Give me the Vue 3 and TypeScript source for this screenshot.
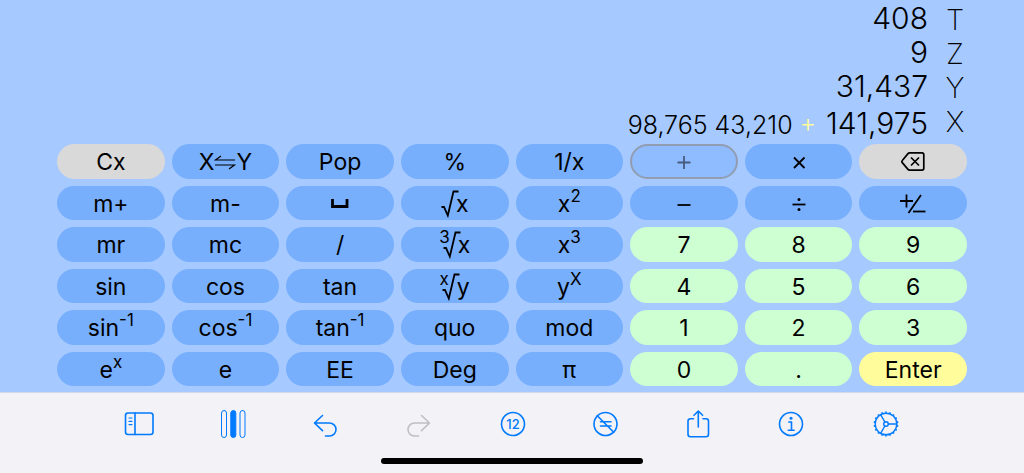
<script setup lang="ts">
interface Key {
  label: string
  sup?: string
  index?: string
  icon?: 'swap' | 'space' | 'delete' | 'sign' | 'root' | 'plus' | 'minus' | 'times' | 'divide'
  tone?: 'grey' | 'green' | 'yellow' | 'pressed'
  name?: string
}

const keys: Key[] = [
  { label: 'Cx', tone: 'grey' },
  { label: '', icon: 'swap', name: 'Swap X and Y' },
  { label: 'Pop' },
  { label: '%' },
  { label: '1/x' },
  { label: '', icon: 'plus', tone: 'pressed', name: 'Add' },
  { label: '', icon: 'times', name: 'Multiply' },
  { label: '', icon: 'delete', tone: 'grey', name: 'Delete' },

  { label: 'm+' },
  { label: 'm-' },
  { label: '', icon: 'space', name: 'Space' },
  { label: 'x', icon: 'root' },
  { label: 'x', sup: '2' },
  { label: '', icon: 'minus', name: 'Subtract' },
  { label: '', icon: 'divide', name: 'Divide' },
  { label: '', icon: 'sign', name: 'Change sign' },

  { label: 'mr' },
  { label: 'mc' },
  { label: '/' },
  { label: 'x', icon: 'root', index: '3' },
  { label: 'x', sup: '3' },
  { label: '7', tone: 'green' },
  { label: '8', tone: 'green' },
  { label: '9', tone: 'green' },

  { label: 'sin' },
  { label: 'cos' },
  { label: 'tan' },
  { label: 'y', icon: 'root', index: 'x' },
  { label: 'y', sup: 'X' },
  { label: '4', tone: 'green' },
  { label: '5', tone: 'green' },
  { label: '6', tone: 'green' },

  { label: 'sin', sup: '-1' },
  { label: 'cos', sup: '-1' },
  { label: 'tan', sup: '-1' },
  { label: 'quo' },
  { label: 'mod' },
  { label: '1', tone: 'green' },
  { label: '2', tone: 'green' },
  { label: '3', tone: 'green' },

  { label: 'e', sup: 'x' },
  { label: 'e' },
  { label: 'EE' },
  { label: 'Deg' },
  { label: 'π' },
  { label: '0', tone: 'green' },
  { label: '.', tone: 'green' },
  { label: 'Enter', tone: 'yellow' },
]

const teeth = Array.from({ length: 18 }, (_, i) => i * 20)
</script>

<template>
  <main class="calculator">
    <section class="display" aria-label="Stack">
      <div class="values">
        <output>408</output>
        <output>9</output>
        <output>31,437</output>
        <div class="entry">
          <span class="history">98,765 43,210 <span class="op">+</span></span>
          <output>141,975</output>
        </div>
      </div>
      <div class="registers">
        <span>T</span>
        <span>Z</span>
        <span>Y</span>
        <span>X</span>
      </div>
    </section>

    <section class="keypad" aria-label="Keypad">
      <button v-for="(key, i) in keys" :key="i" type="button" class="key" :class="key.tone" :aria-label="key.name">
        <template v-if="key.icon === 'swap'">
          <span>X</span>
          <svg width="22" height="18" viewBox="0 0 22 18" class="line thin">
            <path d="M21 7H1.500L7 3M1 12h19.500L15 16" />
          </svg>
          <span>Y</span>
        </template>
        <svg v-else-if="key.icon === 'plus'" width="14" height="20" viewBox="0 0 14 20" class="line">
          <path d="M.5 10.500h13M7 4v13" />
        </svg>
        <svg v-else-if="key.icon === 'minus'" width="14" height="20" viewBox="0 0 14 20" class="line">
          <path d="M.5 11h13" />
        </svg>
        <svg v-else-if="key.icon === 'times'" width="14" height="20" viewBox="0 0 14 20" class="line">
          <path d="M2 5.500l10.500 10.500M12.500 5.500L2 16" />
        </svg>
        <svg v-else-if="key.icon === 'divide'" width="14" height="20" viewBox="0 0 14 20" class="line">
          <path d="M.5 10.500h13" />
          <circle cx="7" cy="5.500" r="1.500" class="dot" />
          <circle cx="7" cy="15.500" r="1.500" class="dot" />
        </svg>
        <svg v-else-if="key.icon === 'space'" width="18" height="12" viewBox="0 0 18 12" class="line heavy">
          <path d="M1.500 1v7.500h14.500V1" />
        </svg>
        <svg v-else-if="key.icon === 'delete'" width="24" height="20" viewBox="0 0 24 20" class="line delete">
          <path d="M8.500 .9h12.500a1.800 1.800 0 0 1 1.800 1.800v13.600a1.800 1.800 0 0 1-1.800 1.800H8.500a2 2 0 0 1-1.500-.7L1.500 10.900a2 2 0 0 1 0-2.700L7 1.600A2 2 0 0 1 8.500 .9zM10 5.500l8 8M18 5.500l-8 8" />
        </svg>
        <svg v-else-if="key.icon === 'sign'" width="26" height="20" viewBox="0 0 26 20" class="line">
          <path d="M0 7h13M6.500 .5v13M21 1L8.500 19" />
          <path d="M13 17.500h12.500" />
        </svg>
        <template v-else-if="key.icon === 'root'">
          <span v-if="key.index" class="index">{{ key.index }}</span>
          <svg width="18" height="28" viewBox="0 0 18 28" class="line root">
            <path d="M.5 17H3L6.800 25.500 12.500 1.500H17.500" />
          </svg>
          <span>{{ key.label }}</span>
        </template>
        <template v-else>
          <span>{{ key.label }}</span><span v-if="key.sup" class="sup">{{ key.sup }}</span>
        </template>
      </button>
    </section>

    <footer class="dock">
      <nav class="toolbar" aria-label="Tools">
        <button type="button" aria-label="Sidebar">
          <svg width="30" height="30" viewBox="0 0 30 30">
            <rect x="1.500" y="4" width="27.500" height="21.500" rx="2.500" />
            <path d="M11 4v21.500" />
            <path d="M5 9h3M5 12.300h3M5 15.600h3" class="rows" />
          </svg>
        </button>
        <button type="button" aria-label="Columns">
          <svg width="30" height="30" viewBox="0 0 30 30">
            <rect x="4.500" y="1.500" width="5" height="27" rx="2.500" class="fine" />
            <rect x="13.800" y="1.500" width="5" height="27" rx="2.500" class="solid" />
            <rect x="23" y="1.500" width="5" height="27" rx="2.500" class="fine" />
          </svg>
        </button>
        <button type="button" aria-label="Undo">
          <svg width="30" height="30" viewBox="0 0 30 30">
            <path d="M11.500 6.500L3.500 14l8 7.700M3.500 14h15a6.500 6.500 0 0 1 0 13h-4" />
          </svg>
        </button>
        <button type="button" aria-label="Redo" disabled>
          <svg width="30" height="30" viewBox="0 0 30 30">
            <path d="M17.500 6.500l8 7.500-8 7.700M25.500 14h-15a6.500 6.500 0 0 0 0 13h4" />
          </svg>
        </button>
        <button type="button" aria-label="12 digits">
          <svg width="30" height="30" viewBox="0 0 30 30">
            <circle cx="15" cy="15" r="11.500" />
            <text x="15" y="20" text-anchor="middle" class="digits">12</text>
          </svg>
        </button>
        <button type="button" aria-label="Not equal">
          <svg width="30" height="30" viewBox="0 0 30 30">
            <circle cx="14.500" cy="15" r="11.500" />
            <path d="M9.500 12.700h10.500M9.500 17h10.500M6.300 6.800l16.400 16.400" />
          </svg>
        </button>
        <button type="button" aria-label="Share">
          <svg width="30" height="30" viewBox="0 0 30 30">
            <path d="M9.500 9.800H6.500A2.500 2.500 0 0 0 4 12.300v13A2.500 2.500 0 0 0 6.500 27.800h15.500a2.500 2.500 0 0 0 2.500-2.500V12.300A2.500 2.500 0 0 0 22 9.800h-3M14.300 18V2M10 6.300L14.300 2 18.600 6.300" />
          </svg>
        </button>
        <button type="button" aria-label="Information">
          <svg width="30" height="30" viewBox="0 0 30 30">
            <circle cx="13" cy="15" r="11.500" />
            <path d="M10.800 13H13.500v8M10.300 21.200h5.800" />
            <circle cx="13" cy="9.300" r="1.500" class="dot" />
          </svg>
        </button>
        <button type="button" aria-label="Settings">
          <svg width="30" height="30" viewBox="0 0 30 30" class="gear">
            <circle cx="15" cy="15" r="10.800" />
            <circle cx="15" cy="15" r="2.300" />
            <path d="M17.300 15h8.500M13.900 13L9.600 5.700M13.900 17l-4.300 7.300" />
            <path v-for="a in teeth" :key="a" d="M15 3.800V2.600" :transform="`rotate(${a} 15 15)`" class="tooth" />
          </svg>
        </button>
      </nav>
      <div class="home"></div>
    </footer>
  </main>
</template>

<style>
body {
  margin: 0;
  background: #f2f2f7;
}
</style>

<style scoped>
.calculator {
  min-height: 100vh;
  display: flex;
  flex-direction: column;
  background: #a6c9ff;
  color: #000;
  font-family: Inter, "Liberation Sans", sans-serif;
}

.display {
  display: flex;
  justify-content: flex-end;
  gap: 16px;
  height: 144px;
  padding: 1px 58px 0 0;
  box-sizing: border-box;
  font-size: 30px;
}

.values {
  display: flex;
  flex-direction: column;
  align-items: flex-end;
  line-height: 34px;
  font-weight: 300;
}

.entry {
  display: flex;
  align-items: baseline;
  gap: 10px;
  padding-top: 3px;
}

.history {
  font-size: 25px;
}

.op {
  color: #fffd9b;
}

.registers {
  display: flex;
  flex-direction: column;
  align-items: center;
  padding-top: 2px;
  width: 22px;
  font-size: 29px;
  font-weight: 200;
  line-height: 34px;
}

.keypad {
  display: grid;
  grid-template-columns: repeat(8, 1fr);
  grid-auto-rows: 1fr;
  gap: 7px;
  min-height: 242px;
  padding: 0 57px 6px;
}

.key {
  display: flex;
  align-items: center;
  justify-content: center;
  min-height: 0;
  padding: 2px 0 0;
  border: 0;
  border-radius: 18px;
  background: #78affc;
  color: #000;
  font: 400 23px/32px Inter, "Liberation Sans", sans-serif;
}

.key.grey {
  background: #d9d9d9;
}

.key.green {
  background: #cdffd2;
}

.key.yellow {
  background: #fffd9b;
}

.key.pressed {
  border: 2px solid #929db2;
  background: #8fbbff;
  color: #465c7e;
}

.sup,
.index {
  font-size: 17px;
  line-height: 16px;
  padding-bottom: 16px;
}

.index {
  margin-right: -7px;
}

.line {
  fill: none;
  stroke: currentColor;
  stroke-width: 1.8;
}

.thin {
  stroke-width: 1.2;
}

.heavy {
  stroke-width: 2.8;
}

.delete {
  stroke-width: 1.7;
}

.root {
  margin-right: -3px;
}

.dot {
  fill: currentColor;
  stroke: none;
}

.dock {
  flex: 1;
  display: flex;
  flex-direction: column;
  align-items: center;
  justify-content: space-between;
  border-top: 1px solid #d3dbea;
  background: #f2f2f7;
}

.toolbar {
  align-self: stretch;
  display: flex;
  justify-content: space-between;
  padding: 8px 116px 0 117px;
}

.toolbar button {
  display: flex;
  align-items: center;
  justify-content: center;
  width: 44px;
  height: 46px;
  padding: 0;
  border: 0;
  background: none;
  color: #007aff;
}

.toolbar button:disabled {
  color: #bfbfc4;
}

.toolbar svg {
  fill: none;
  stroke: currentColor;
  stroke-width: 1.6;
  stroke-linecap: round;
  stroke-linejoin: round;
}

.toolbar .gear {
  stroke-width: 1.4;
}

.toolbar .tooth {
  stroke-width: 1.8;
  stroke-linecap: butt;
}

.toolbar .rows {
  stroke-width: 1.2;
}

.toolbar .fine {
  stroke-width: 1;
}

.toolbar .solid {
  fill: currentColor;
  stroke-width: 1;
}

.toolbar .dot,
.toolbar .digits {
  fill: currentColor;
  stroke: none;
}

.digits {
  font: 500 13px Inter, "Liberation Sans", sans-serif;
}

.home {
  width: 262px;
  height: 6px;
  margin-bottom: 9px;
  border-radius: 3px;
  background: #000;
}
</style>
